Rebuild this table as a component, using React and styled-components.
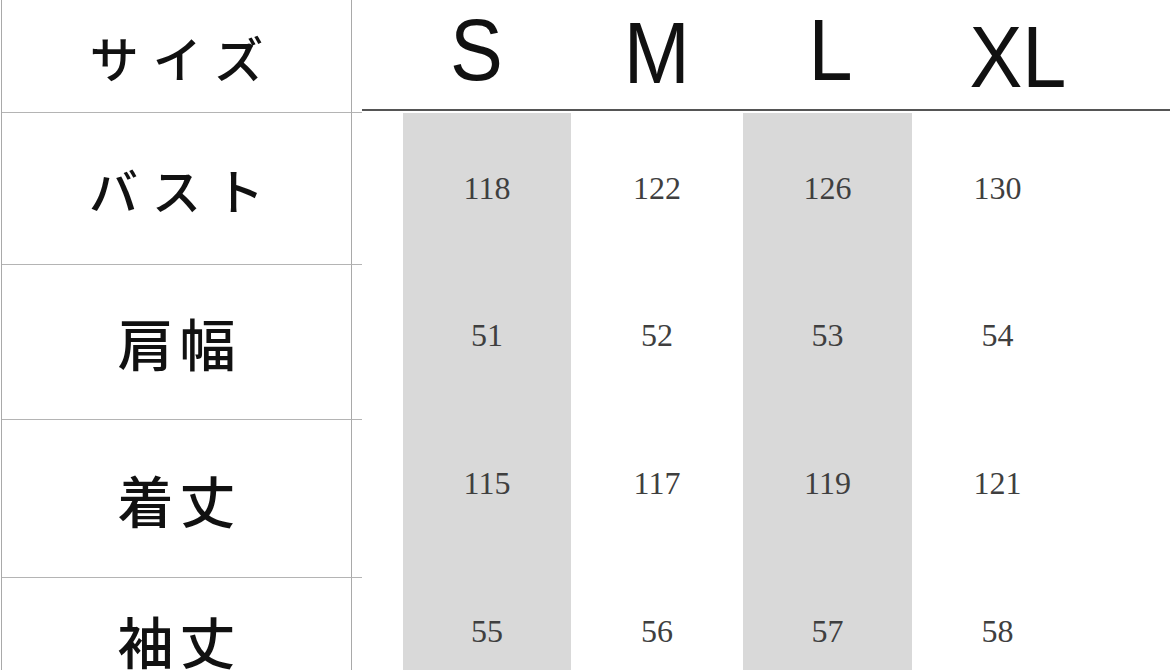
import React from 'react';
import styled, { createGlobalStyle } from 'styled-components';

const COLS = '350px 10px 41px 168px 172px 169px 171px 1fr';

const sizes = [
  { name: 'S', dx: -11, dy: -5 },
  { name: 'M', dx: 0, dy: -2 },
  { name: 'L', dx: 3, dy: -5 },
  { name: 'XL', dx: 20, dy: 2 },
];

const rows = [
  { label: 'バスト', kana: true, height: 152, lift: 1, values: [118, 122, 126, 130] },
  { label: '肩幅', height: 155, lift: 7, values: [51, 52, 53, 54] },
  { label: '着丈', height: 158, lift: 16, values: [115, 117, 119, 121] },
  { label: '袖丈', height: 124, lift: 9, values: [55, 56, 57, 58] },
];

const GlobalStyle = createGlobalStyle`
  html, body {
    margin: 0;
    padding: 0;
    background: #ffffff;
    overflow: hidden;
  }
`;

const Table = styled.div`
  width: 1169px;
  height: 670px;
  margin-left: 1px;
  border-left: 1px solid #a9a9a9;
  overflow: hidden;
  background: #ffffff;
`;

const Row = styled.div`
  display: grid;
  grid-template-columns: ${COLS};
  height: ${(p) => p.$height}px;
`;

const Label = styled.div`
  display: flex;
  align-items: center;
  justify-content: center;
  box-sizing: border-box;
  border-right: 1px solid #a9a9a9;
  border-bottom: 1px solid #b4b4b4;
  color: #111;
  font-family: "Noto Sans CJK JP", sans-serif;
  font-weight: 500;
  font-size: ${(p) => (p.$kana ? 49 : 56)}px;
  letter-spacing: ${(p) => (p.$kana ? 14 : 6)}px;
  padding-left: ${(p) => (p.$kana ? 14 : 6)}px;
  line-height: 1;
`;

const Stub = styled.div`
  border-bottom: 1px solid #b4b4b4;
`;

const HeadCell = styled.div`
  display: flex;
  align-items: center;
  justify-content: center;
  box-sizing: border-box;
  height: 111px;
  border-bottom: 2px solid #555;
`;

const Letter = styled.span`
  display: inline-block;
  font-family: "Liberation Sans", Arial, sans-serif;
  font-size: 88px;
  line-height: 1;
  color: #111;
`;

const Value = styled.div`
  display: flex;
  align-items: center;
  justify-content: center;
  background: ${(p) => (p.$shaded ? '#d9d9d9' : 'transparent')};
  padding-bottom: ${(p) => p.$lift * 2}px;
  font-family: "Liberation Serif", "Times New Roman", serif;
  font-size: 32px;
  color: #3f3f3f;
`;

export default function App() {
  return (
    <>
      <GlobalStyle />
      <Table>
        <Row $height={113}>
          <Label $kana>サイズ</Label>
          <Stub />
          <HeadCell />
          {sizes.map((s) => (
            <HeadCell key={s.name}>
              <Letter style={{ transform: `translate(${s.dx}px, ${s.dy}px) scaleX(0.9)` }}>
                {s.name}
              </Letter>
            </HeadCell>
          ))}
          <HeadCell />
        </Row>
        {rows.map((r) => (
          <Row key={r.label} $height={r.height}>
            <Label $kana={r.kana}>{r.label}</Label>
            <Stub />
            <div />
            {r.values.map((v, i) => (
              <Value key={i} $shaded={i % 2 === 0} $lift={r.lift}>
                {v}
              </Value>
            ))}
            <div />
          </Row>
        ))}
      </Table>
    </>
  );
}
